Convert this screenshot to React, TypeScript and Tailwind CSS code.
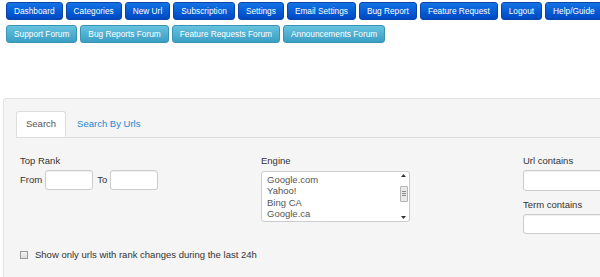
import React from 'react'

const mainNav = [
  'Dashboard',
  'Categories',
  'New Url',
  'Subscription',
  'Settings',
  'Email Settings',
  'Bug Report',
  'Feature Request',
  'Logout',
  'Help/Guide'
]

const forumNav = [
  'Support Forum',
  'Bug Reports Forum',
  'Feature Requests Forum',
  'Announcements Forum'
]

const engines = ['Google.com', 'Yahoo!', 'Bing CA', 'Google.ca']

const NavButton = ({ label, kind }: { label: string; kind: 'primary' | 'info' }) => (
  <a
    href="#"
    className={
      kind === 'primary'
        ? 'flex h-[18px] shrink-0 items-center rounded-[3px] border border-[#0b45a8] bg-linear-to-b from-[#1473e6] to-[#0048c4] px-[7px] text-[8.3px] text-white'
        : 'flex h-[18px] shrink-0 items-center rounded-[3px] border border-[#3b93b3] bg-linear-to-b from-[#66c3df] to-[#3a9ec4] px-[7px] text-[8.3px] text-white'
    }
  >
    {label}
  </a>
)

const TextInput = ({ className }: { className: string }) => (
  <input
    type="text"
    className={
      'h-[20px] rounded-[3px] border border-[#cccccc] bg-white shadow-[inset_0_1px_1px_rgba(0,0,0,0.07)] ' +
      className
    }
  />
)

export default function App() {
  return (
    <div className="h-[277px] w-[600px] overflow-hidden bg-white font-['Liberation_Sans',Arial,sans-serif] text-[#333]">
      <div className="flex flex-col gap-[5px] pl-[6px] pt-[2px]">
        <div className="flex gap-[3px]">
          {mainNav.map((item) => (
            <NavButton key={item} label={item} kind="primary" />
          ))}
        </div>
        <div className="flex gap-[3px]">
          {forumNav.map((item) => (
            <NavButton key={item} label={item} kind="info" />
          ))}
        </div>
      </div>

      <div className="ml-[3px] mt-[55px] w-[640px] rounded-[3px] border border-[#e3e3e3] bg-[#f5f5f5] pl-[12px] pt-[12px] text-[9.5px]">
        <div className="flex border-b border-[#dddddd]">
          <div className="-mb-px flex h-[26px] items-center rounded-t-[3px] border border-[#dddddd] border-b-transparent bg-white px-[9px] text-[#555]">
            Search
          </div>
          <div className="ml-[2px] flex h-[26px] items-center px-[9px] text-[#1a87d0]">
            Search By Urls
          </div>
        </div>

        <div className="grid grid-cols-[241px_262px_1fr] pl-[4px] pt-[16px]">
          <div>
            <div className="mb-[3px] leading-[13px]">Top Rank</div>
            <div className="flex items-center">
              <span>From</span>
              <TextInput className="ml-[3px] w-[48px]" />
              <span className="ml-[4px]">To</span>
              <TextInput className="ml-[3px] w-[48px]" />
            </div>
          </div>

          <div>
            <div className="mb-[4px] leading-[13px]">Engine</div>
            <div className="flex h-[51px] w-[149px] rounded-[3px] border border-[#cccccc] bg-white">
              <div className="flex-1 pl-[5px] pt-[2px] text-[#555] leading-[11.3px]">
                {engines.map((e) => (
                  <div key={e}>{e}</div>
                ))}
              </div>
              <div className="flex w-[11px] flex-col items-center justify-between py-[2px]">
                <svg width="5" height="3" viewBox="0 0 5 3">
                  <path d="M2.5 0 L5 3 L0 3 Z" fill="#333" />
                </svg>
                <div className="-mt-[6px] flex h-[16px] w-[8px] flex-col items-center justify-center gap-[1px] rounded-[1px] border border-[#b5b5b5] bg-[#e9e9e9]">
                  <div className="h-px w-[4px] bg-[#888]" />
                  <div className="h-px w-[4px] bg-[#888]" />
                  <div className="h-px w-[4px] bg-[#888]" />
                </div>
                <svg width="5" height="3" viewBox="0 0 5 3">
                  <path d="M0 0 L5 0 L2.5 3 Z" fill="#333" />
                </svg>
              </div>
            </div>
          </div>

          <div>
            <div className="mb-[3px] leading-[13px]">Url contains</div>
            <TextInput className="h-[21px] w-[100px]" />
            <div className="mb-[3px] mt-[7px] leading-[13px]">Term contains</div>
            <TextInput className="w-[100px]" />
          </div>
        </div>

        <label className="ml-[4px] mt-[14px] flex items-center gap-[7px]">
          <span className="h-[8px] w-[8px] border border-[#999] bg-linear-to-b from-[#f4f4f4] to-[#dcdcdc]" />
          <span>Show only urls with rank changes during the last 24h</span>
        </label>
        <div className="h-[40px]" />
      </div>
    </div>
  )
}
